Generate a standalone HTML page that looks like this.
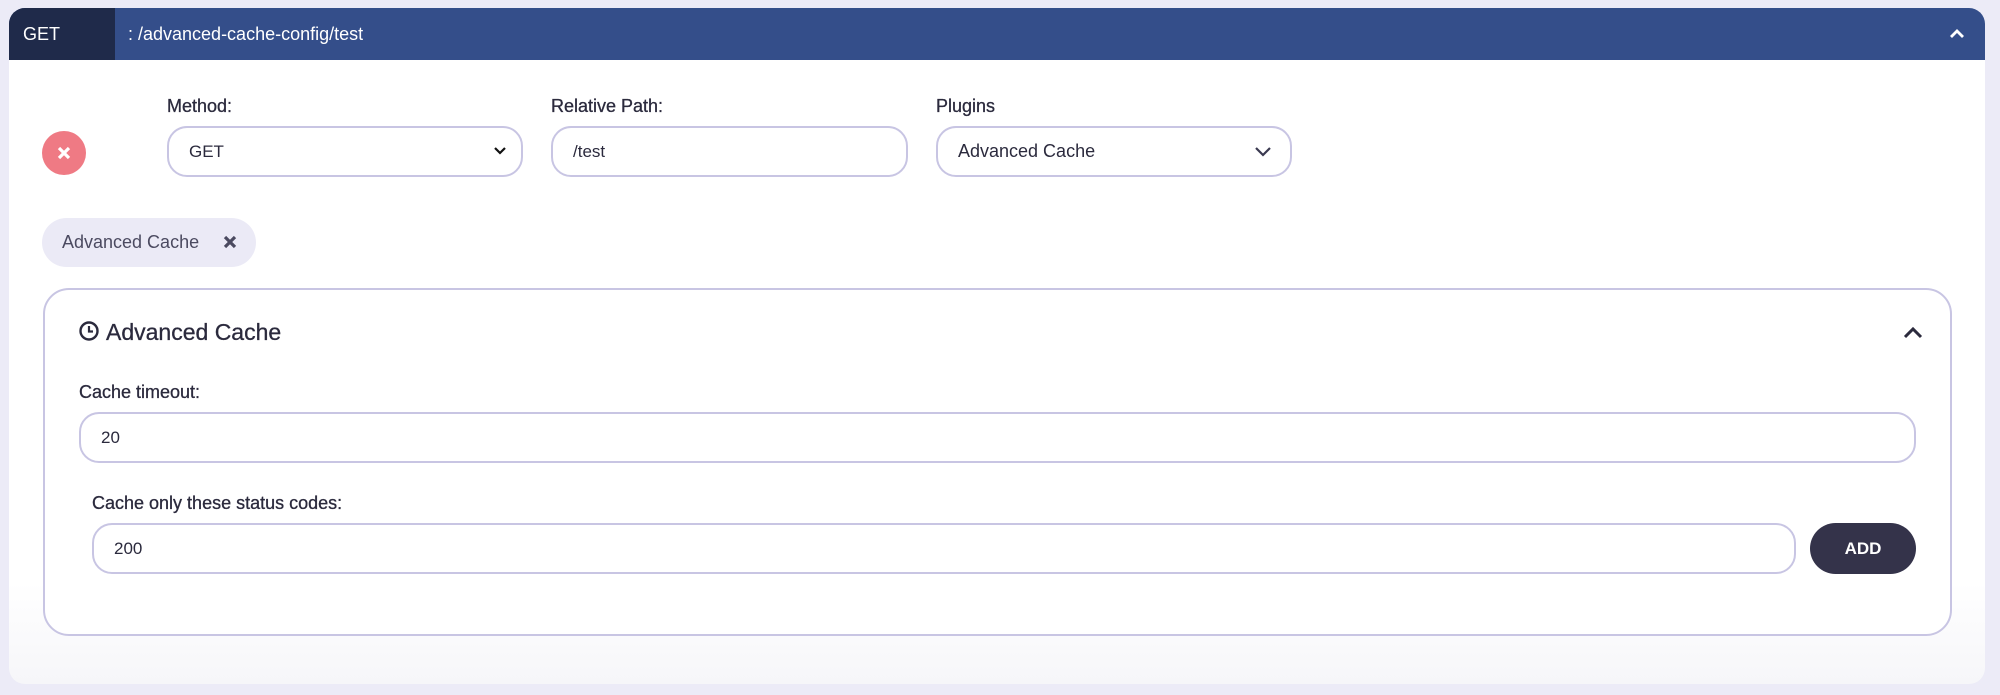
<!DOCTYPE html>
<html><head><meta charset="utf-8"><style>
*{box-sizing:border-box;margin:0;padding:0}
body{width:2000px;height:695px;background:#ecebf7;font-family:"Liberation Sans",sans-serif;color:#2b2a3d;position:relative;overflow:hidden}
.abs{position:absolute}
.card{left:9px;top:8px;width:1976px;height:676px;background:linear-gradient(#fff 85%,#f6f6f9);border-radius:16px;overflow:hidden}
.hdr{left:0;top:0;width:1976px;height:52px;background:#344e8a}
.get{left:0;top:0;width:106px;height:52px;background:#1f2a4a;color:#fff;font-size:18px;line-height:52px;padding-left:14px}
.path{left:119px;top:0;line-height:52px;color:#fff;font-size:18px}
.lbl{font-size:18px;color:#2b2a3d;-webkit-text-stroke:0.3px #2b2a3d}
.inp{border:2px solid #c8c5e3;border-radius:20px;background:#fff;font-size:17px;line-height:47px;padding-left:20px;color:#2b2a3d}
</style></head><body>
<div class="abs card">
 <div class="abs hdr"></div>
 <div class="abs get">GET</div>
 <div class="abs path">: /advanced-cache-config/test</div>
 <svg class="abs" style="left:1940px;top:20px" width="16" height="12" viewBox="0 0 16 12"><path d="M2 9 L8 3 L14 9" stroke="#fff" stroke-width="2.8" fill="none"/></svg>
</div>
<div class="abs" style="left:42px;top:131px;width:44px;height:44px;border-radius:50%;background:#ef7a84"></div>
<svg class="abs" style="left:55px;top:144px" width="18" height="18" viewBox="0 0 18 18"><path d="M4 4L14 14M14 4L4 14" stroke="#fff" stroke-width="3.2"/></svg>
<div class="abs lbl" style="left:167px;top:96px">Method:</div>
<div class="abs lbl" style="left:551px;top:96px">Relative Path:</div>
<div class="abs lbl" style="left:936px;top:96px">Plugins</div>
<div class="abs inp" style="left:167px;top:126px;width:356px;height:51px">GET</div>
<svg class="abs" style="left:493px;top:146px" width="14" height="10" viewBox="0 0 14 10"><path d="M2 2L7 7L12 2" stroke="#111" stroke-width="2.2" fill="none"/></svg>
<div class="abs inp" style="left:551px;top:126px;width:357px;height:51px">/test</div>
<div class="abs inp" style="left:936px;top:126px;width:356px;height:51px;font-size:18px">Advanced Cache</div>
<svg class="abs" style="left:1254px;top:146px" width="18" height="12" viewBox="0 0 18 12"><path d="M2 2L9 9L16 2" stroke="#3a3950" stroke-width="2.2" fill="none"/></svg>
<div class="abs" style="left:42px;top:218px;width:214px;height:49px;border-radius:25px;background:#ebeaf6;font-size:18px;line-height:49px;padding-left:20px;color:#4b4a60">Advanced Cache</div>
<svg class="abs" style="left:222px;top:234px" width="16" height="16" viewBox="0 0 16 16"><path d="M3 3L13 13M13 3L3 13" stroke="#4b4a60" stroke-width="3.2"/></svg>
<div class="abs" style="left:43px;top:288px;width:1909px;height:348px;border:2px solid #c8c5e3;border-radius:26px;background:#fff"></div>
<svg class="abs" style="left:78px;top:320px" width="22" height="22" viewBox="0 0 22 22"><circle cx="11" cy="11" r="8.5" stroke="#2b2a3d" stroke-width="2.4" fill="none"/><path d="M11 6V11.5H15" stroke="#2b2a3d" stroke-width="2.2" fill="none"/></svg>
<div class="abs" style="left:106px;top:319px;font-size:23px;color:#2b2a3d;-webkit-text-stroke:0.3px #2b2a3d">Advanced Cache</div>
<svg class="abs" style="left:1902px;top:326px" width="22" height="14" viewBox="0 0 22 14"><path d="M3 11L11 3L19 11" stroke="#2b2a3d" stroke-width="3" fill="none"/></svg>
<div class="abs lbl" style="left:79px;top:382px">Cache timeout:</div>
<div class="abs inp" style="left:79px;top:412px;width:1837px;height:51px">20</div>
<div class="abs lbl" style="left:92px;top:493px">Cache only these status codes:</div>
<div class="abs inp" style="left:92px;top:523px;width:1704px;height:51px">200</div>
<div class="abs" style="left:1810px;top:523px;width:106px;height:51px;border-radius:26px;background:#34334a;color:#fff;font-weight:bold;font-size:17px;line-height:51px;text-align:center">ADD</div>
</body></html>
